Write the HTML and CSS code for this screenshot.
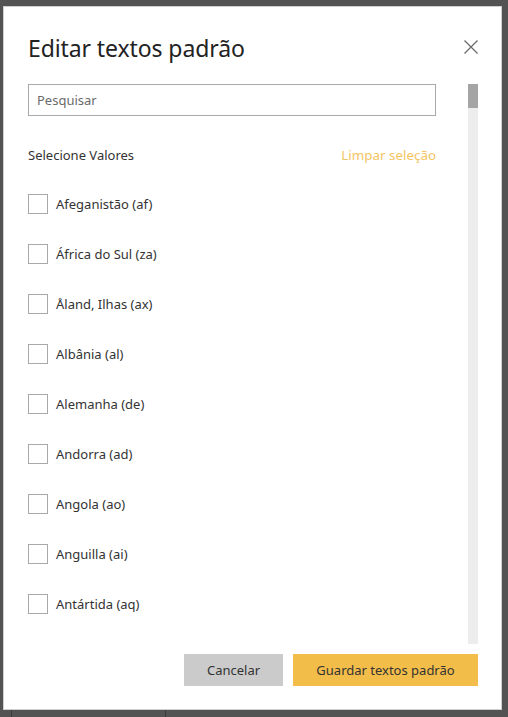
FILE: index.html
```html
<!DOCTYPE html>
<html>
<head>
    <title>Editar textos padrão</title>
    <link rel="stylesheet" href="styles.css">
</head>
<body>

<div class="modal">
    <div class="modal-header">
        <h2>Editar textos padrão</h2>
        <button class="close" aria-label="Fechar">
            <svg width="14" height="14" viewBox="0 0 14 14">
                <path d="M0.5 0.5 L13.5 13.5 M13.5 0.5 L0.5 13.5" stroke="#6b6b6b" stroke-width="1.3" fill="none"/>
            </svg>
        </button>
    </div>

    <div class="modal-body">
        <div class="scroll-content">
            <input class="search" type="text" placeholder="Pesquisar">
            <div class="list-header">
                <span>Selecione Valores</span>
                <a class="clear" href="#">Limpar seleção</a>
            </div>
            <ul class="options" id="options">
                <!-- Rows will be added here -->
            </ul>
        </div>
        <div class="scrollbar">
            <div class="thumb"></div>
        </div>
    </div>

    <div class="modal-footer">
        <button class="btn btn-cancel">Cancelar</button>
        <button class="btn btn-save">Guardar textos padrão</button>
    </div>
</div>

<div class="backdrop-row">
    <div class="cell first"></div>
    <div class="cell"></div>
</div>

<script>
var countries = [
    "Afeganistão (af)", "África do Sul (za)", "Åland, Ilhas (ax)", "Albânia (al)",
    "Alemanha (de)", "Andorra (ad)", "Angola (ao)", "Anguilla (ai)", "Antártida (aq)"
];
var list = document.getElementById('options');
countries.forEach(function(name) {
    var li = document.createElement('li');
    li.innerHTML = '<span class="box"></span><span class="label">' + name + '</span>';
    list.appendChild(li);
});
</script>

</body>
</html>
```

FILE: styles.css
```css
body {
    background-color: #535353;
    margin: 0;
    padding: 6px 0 0 3px;
    font-family: 'Noto Sans', sans-serif;
    color: #333;
    height: 717px;
    box-sizing: border-box;
    overflow: hidden;
}
.modal {
    width: 499px;
    height: 704px;
    box-sizing: border-box;
    background-color: #fff;
    border: 1px solid #cfcfcf;
    padding: 0 23px 0 24px;
    display: flex;
    flex-direction: column;
}
.modal-header {
    display: flex;
    justify-content: space-between;
    align-items: flex-start;
    height: 77px;
}
h2 {
    font-size: 23px;
    font-weight: 400;
    margin: 25px 0 0 0;
    color: #222;
    letter-spacing: -0.1px;
}
.close {
    border: none;
    background: none;
    padding: 0;
    margin: 33px 0 0 0;
    width: 14px;
    height: 14px;
    display: block;
}
.close svg {
    display: block;
}
.modal-body {
    display: flex;
    gap: 32px;
    height: 560px;
}
.scroll-content {
    width: 408px;
    overflow: hidden;
}
.search {
    display: block;
    width: 100%;
    height: 32px;
    box-sizing: border-box;
    border: 1px solid #a9a9a9;
    padding: 0 8px;
    font-family: 'Noto Sans', sans-serif;
    font-size: 13px;
    margin: 0;
}
.search::placeholder {
    color: #6b6b6b;
}
.list-header {
    display: flex;
    justify-content: space-between;
    align-items: center;
    font-size: 13px;
    height: 22px;
    margin-top: 28px;
}
.clear {
    color: #f5c462;
    font-size: 13.4px;
    text-decoration: none;
}
.options {
    list-style: none;
    margin: 28px 0 0 0;
    padding: 0;
}
.options li {
    display: flex;
    align-items: center;
    height: 20px;
    margin-bottom: 30px;
    font-size: 13px;
}
.box {
    width: 20px;
    height: 20px;
    box-sizing: border-box;
    border: 1px solid #a9a9a9;
    margin-right: 8px;
    flex-shrink: 0;
}
.scrollbar {
    width: 10px;
    background-color: #ededed;
}
.thumb {
    height: 24px;
    background-color: #a5a5a5;
}
.modal-footer {
    display: flex;
    justify-content: flex-end;
    gap: 10px;
    margin-top: 10px;
}
.btn {
    height: 32px;
    border: none;
    font-family: 'Noto Sans', sans-serif;
    font-size: 13px;
    color: #333;
    padding: 0;
}
.btn-cancel {
    width: 99px;
    background-color: #cbcbcb;
}
.btn-save {
    width: 185px;
    background-color: #f3bd4a;
}
.backdrop-row {
    display: flex;
    height: 7px;
    margin-left: -3px;
}
.cell {
    width: 153px;
    border-right: 1px solid #3a3a3a;
}
.cell.first {
    width: 11px;
}
```
